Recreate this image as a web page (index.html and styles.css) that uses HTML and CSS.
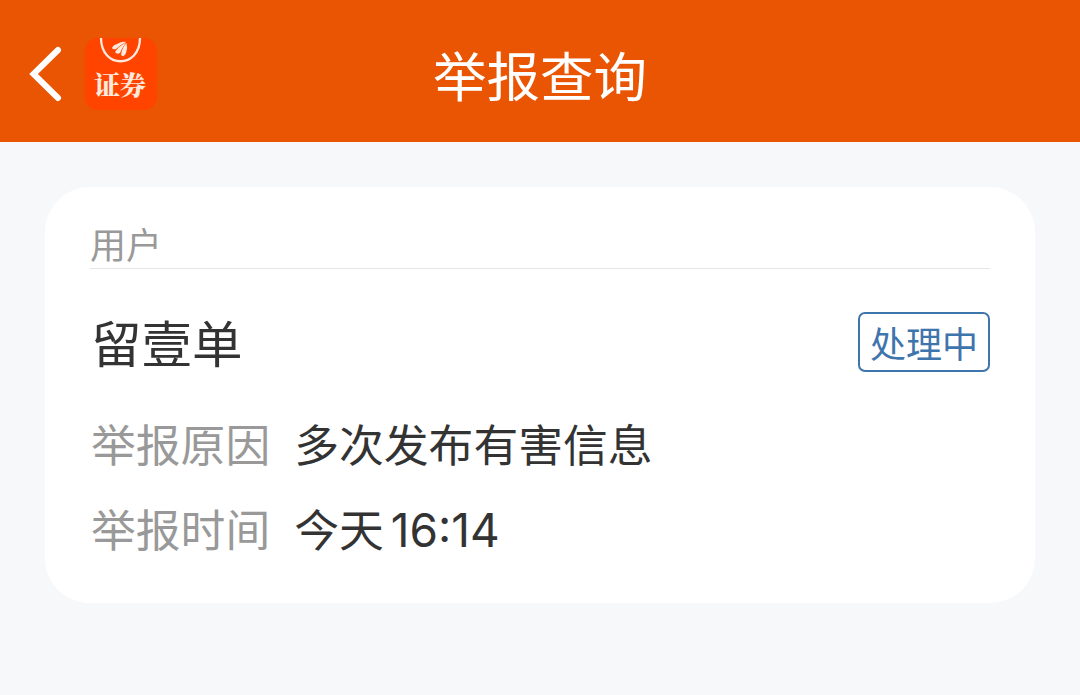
FILE: index.html
```html
<!DOCTYPE html>
<html lang="zh-CN">
  <head>
    <meta charset="UTF-8" />
    <meta name="viewport" content="width=device-width, initial-scale=1.0" />
    <title>举报查询</title>
    <link rel="stylesheet" href="styles.css">
  </head>
  <body>
    <header class="topbar">
      <div class="topbar-left">
        <svg class="back" width="34" height="56" viewBox="0 0 34 56">
          <path d="M30 4 L5.5 28 L30 52" fill="none" stroke="#fff" stroke-width="6" stroke-linecap="round" />
        </svg>
        <div class="logo">
          <svg class="logo-mark" width="44" height="26" viewBox="0 0 44 26">
            <path d="M2 0 C2 31 41 31 41 0" fill="none" stroke="#ffe9dc" stroke-width="2.3" />
            <path d="M13 10 Q14 7 18 6 Q23 3 27 4 Q21 7 17 11 Q14 12 13 10 Z M16 14 Q20 8 27 4.5 Q23 10 21 15 Q18 17 16 14 Z M22 17 Q23 10 27.5 5 Q29 10 27 15 Q25 20 22 17 Z" fill="#ffe9dc" />
          </svg>
          <span class="logo-text">证券</span>
        </div>
      </div>
      <h1 class="title">举报查询</h1>
      <div></div>
    </header>

    <main class="card">
      <div class="card-label">用户</div>
      <div class="user-row">
        <span class="user-name">留壹单</span>
        <span class="status">处理中</span>
      </div>
      <div class="row">
        <span class="row-label">举报原因</span>
        <span class="row-value">多次发布有害信息</span>
      </div>
      <div class="row">
        <span class="row-label">举报时间</span>
        <span class="row-value">今天<span class="time">16:14</span></span>
      </div>
    </main>
  </body>
</html>
```

FILE: styles.css
```css
body {
  margin: 0;
  background: #f7f8fa;
  color: #333;
  font-family: "Noto Sans CJK SC", sans-serif;
}

.topbar {
  display: grid;
  grid-template-columns: 1fr auto 1fr;
  align-items: center;
  height: 142px;
  background: #e95502;
}

.topbar-left {
  display: flex;
  align-items: center;
  padding: 6px 0 0 28px;
}

.logo {
  display: flex;
  flex-direction: column;
  align-items: center;
  width: 72px;
  height: 72px;
  margin-left: 23px;
  border-radius: 13px;
  background: #ff4400;
}

.logo-mark {
  display: block;
}

.logo-text {
  margin-right: 2px;
  color: #ffe9dc;
  font-family: "Noto Serif CJK SC", "Noto Sans CJK SC", serif;
  font-size: 26px;
  font-weight: 900;
  line-height: 40px;
}

.title {
  margin: 5px 0 0;
  color: #fff;
  font-size: 53.5px;
  font-weight: 400;
  line-height: 72px;
}

.card {
  box-sizing: border-box;
  height: 416px;
  margin: 45px 45px 0;
  padding: 34px 45px 0;
  border-radius: 45px;
  background: #fff;
}

.card-label {
  height: 47px;
  border-bottom: 1px solid #e5e5e5;
  color: #999;
  font-size: 36px;
  line-height: 45px;
}

.user-row {
  display: flex;
  justify-content: space-between;
  align-items: center;
  margin-top: 43px;
  height: 60px;
}

.user-name {
  padding: 0 0 2px 1px;
  font-size: 50.5px;
  line-height: 60px;
}

.status {
  box-sizing: border-box;
  width: 132px;
  height: 60px;
  border: 2px solid #3f75ad;
  border-radius: 7px;
  color: #3f75ad;
  font-size: 36px;
  line-height: 56px;
  text-align: center;
}

.row {
  display: flex;
  gap: 24px;
  margin-top: 39px;
  padding-left: 1px;
  font-size: 44.8px;
  line-height: 64px;
}

.row + .row {
  margin-top: 21px;
}

.row-label {
  color: #999;
}

.time {
  margin-left: 7px;
  font-family: Inter, sans-serif;
  font-size: 46px;
  line-height: 1;
}
```
